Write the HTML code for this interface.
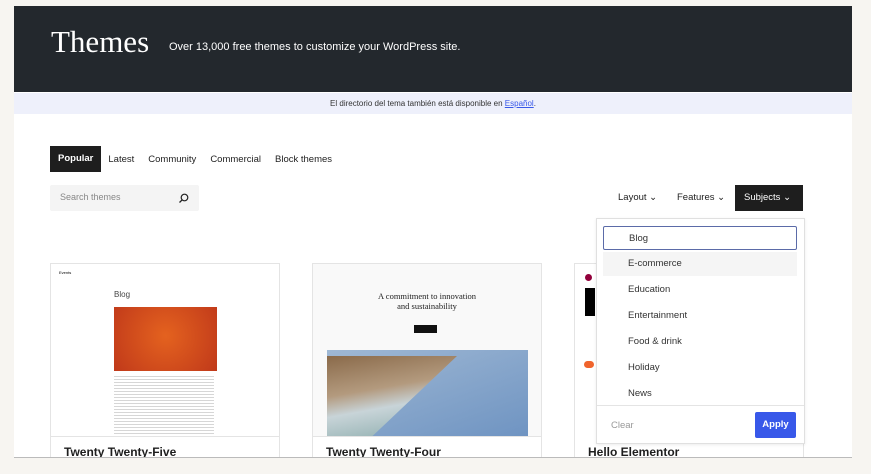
<!DOCTYPE html>
<html><head><meta charset="utf-8"><style>
*{box-sizing:border-box;margin:0;padding:0}
body{width:871px;height:474px;background:#f7f5f1;font-family:"Liberation Sans",sans-serif;position:relative;overflow:hidden}
.abs{position:absolute}
.panel{left:14px;top:6px;width:838px;height:452px;background:#fff;overflow:hidden;border-bottom:1px solid #bbb}
.hdr{left:0;top:0;width:838px;height:86px;background:#23282d}
.t{left:37px;top:18px;color:#fff;font-family:"Liberation Serif",serif;font-size:31px}
.sub{left:155px;top:35px;color:#fff;font-size:11px}
.ban{left:0;top:87px;width:838px;height:21px;background:#eef0fb;font-size:8px;color:#333;text-align:center;line-height:21px}
.ban u{color:#3858e9}
.tabs{left:36px;top:140px;height:26px;font-size:9.5px;color:#1e1e1e;display:flex;align-items:center}
.tabs span{padding:0 7px}
.tabs .on{background:#1e1e1e;color:#fff;height:26px;line-height:26px;padding:0 8px;font-weight:bold}
.search{left:36px;top:179px;width:149px;height:26px;background:#f4f4f4;border-radius:2px;font-size:9px;color:#888;padding:7px 10px}
.card{border:1px solid #e4e4e4;background:#fff}
.ct{font-weight:bold;font-size:12px;color:#1e1e1e}
.dd{left:582px;top:212px;width:209px;height:226px;background:#fff;border:1px solid #e0e0e0;box-shadow:0 1px 3px rgba(0,0,0,.08)}
.dd .i{position:absolute;left:6px;width:194px;height:24px;font-size:9.5px;color:#333;padding-left:25px;line-height:24px}
</style></head><body>
<div class="abs panel">
 <div class="abs hdr"></div>
 <div class="abs t">Themes</div>
 <div class="abs sub">Over 13,000 free themes to customize your WordPress site.</div>
 <div class="abs ban">El directorio del tema también está disponible en <u>Español</u>.</div>
 <div class="abs tabs"><span class="on">Popular</span><span>Latest</span><span>Community</span><span>Commercial</span><span>Block themes</span></div>
 <div class="abs search">Search themes<svg class="abs" style="left:128px;top:8px" width="11" height="11" viewBox="0 0 11 11"><circle cx="6.5" cy="4.5" r="3.3" fill="none" stroke="#222" stroke-width="1.2"/><path d="M4.2 6.8L1.5 9.5" stroke="#222" stroke-width="1.3"/></svg></div>
 <div class="abs" style="left:604px;top:186px;font-size:9.5px;color:#1e1e1e">Layout ⌄</div>
 <div class="abs" style="left:663px;top:186px;font-size:9.5px;color:#1e1e1e">Features ⌄</div>
 <div class="abs" style="left:721px;top:179px;width:68px;height:26px;background:#1e1e1e;color:#fff;font-size:9.5px;line-height:26px;padding-left:9px">Subjects ⌄</div>

 <div class="abs card" style="left:36px;top:257px;width:230px;height:200px">
  <div class="abs" style="left:8px;top:6px;font-size:4px">Events</div>
  <div class="abs" style="left:63px;top:26px;font-size:8px;color:#444">Blog</div>
  <div class="abs" style="left:63px;top:43px;width:103px;height:64px;background:radial-gradient(circle at 50% 45%,#e4621f,#c0391a)"></div>
  <div class="abs" style="left:63px;top:112px;width:100px;height:60px;background:repeating-linear-gradient(#bbb 0 1px,#fff 1px 3px);opacity:.6"></div>
  <div class="abs" style="left:0;top:172px;width:228px;height:28px;border-top:1px solid #e4e4e4;background:#fff"></div>
  <div class="abs ct" style="left:13px;top:181px">Twenty Twenty-Five</div>
 </div>
 <div class="abs card" style="left:298px;top:257px;width:230px;height:200px;background:#f9f9f9">
  <div class="abs" style="left:64px;top:27px;font-family:'Liberation Serif',serif;font-size:8.5px;text-align:center;width:100px;color:#222">A commitment to innovation and sustainability</div>
  <div class="abs" style="left:101px;top:61px;width:23px;height:8px;background:#111"></div>
  <div class="abs" style="left:14px;top:86px;width:201px;height:86px;background:linear-gradient(160deg,#9fb8d4,#6f94c2)"></div>
  <div class="abs" style="left:14px;top:92px;width:130px;height:80px;background:linear-gradient(170deg,#8a6a4a,#b39a7e 40%,#c8d4d8 60%,#8aa 100%);clip-path:polygon(0 0,100% 0,35% 100%,0 100%)"></div>
  <div class="abs" style="left:0;top:172px;width:228px;height:28px;border-top:1px solid #e4e4e4;background:#fff"></div>
  <div class="abs ct" style="left:13px;top:181px">Twenty Twenty-Four</div>
 </div>
 <div class="abs card" style="left:560px;top:257px;width:230px;height:200px">
  <div class="abs" style="left:10px;top:10px;width:7px;height:7px;border-radius:50%;background:#92003b"></div>
  <div class="abs" style="left:10px;top:24px;width:10px;height:28px;background:#000"></div>
  <div class="abs" style="left:9px;top:97px;width:10px;height:7px;border-radius:4px;background:#f0642c"></div>
  <div class="abs ct" style="left:13px;top:181px">Hello Elementor</div>
 </div>

 <div class="abs dd">
  <div class="i" style="top:7px;border:1px solid #5b6ba8;border-radius:2px">Blog</div>
  <div class="i" style="top:33px;background:#f5f5f5">E-commerce</div>
  <div class="i" style="top:59px">Education</div>
  <div class="i" style="top:85px">Entertainment</div>
  <div class="i" style="top:111px">Food &amp; drink</div>
  <div class="i" style="top:137px">Holiday</div>
  <div class="i" style="top:163px">News</div>
  <div class="abs" style="left:0;top:186px;width:207px;border-top:1px solid #e4e4e4"></div>
  <div class="abs" style="left:14px;top:201px;font-size:9.5px;color:#999">Clear</div>
  <div class="abs" style="left:158px;top:193px;width:41px;height:26px;background:#3858e9;color:#fff;font-weight:bold;font-size:9.5px;text-align:center;line-height:26px;border-radius:2px">Apply</div>
 </div>
</div>
</body></html>
